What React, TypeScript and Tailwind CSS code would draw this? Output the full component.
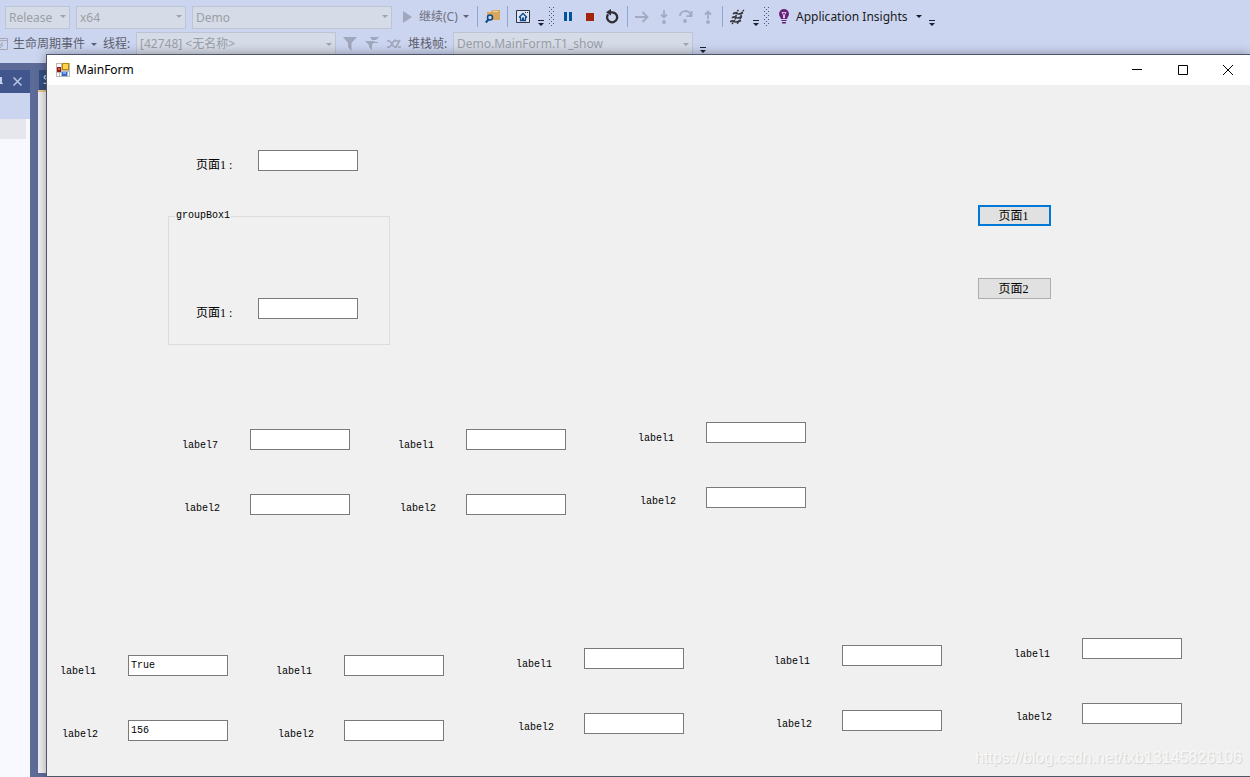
import { useId, type ReactNode } from 'react';
import clsx from 'clsx';

type FieldProps = {
  label: string;
  value?: string;
  className?: string;
  labelClass: string;
};

function Field({ label, value = '', className, labelClass }: FieldProps) {
  const id = useId();
  return (
    <div className={clsx('flex items-start', className)}>
      <label htmlFor={id} className={clsx('shrink-0 leading-3 whitespace-nowrap', labelClass)}>
        {label}
      </label>
      <input
        id={id}
        type="text"
        defaultValue={value}
        className="h-[21px] w-[100px] border border-[#7a7a7a] bg-white px-0.5 font-['Liberation_Mono',monospace] text-[10px] leading-3 outline-none"
      />
    </div>
  );
}

// Two stacked fields, the second label is indented slightly.
function Pair({ first = 'label1', values = [], className }: { first?: string; values?: string[]; className?: string }) {
  return (
    <div className={clsx("flex flex-col gap-[42px] font-['Liberation_Mono',monospace] text-[10px]", className)}>
      <Field label={first} value={values[0]} labelClass="w-[68px] pt-[11px]" />
      <Field label="label2" value={values[1]} labelClass="w-[68px] pl-0.5 pt-[9px]" />
    </div>
  );
}

function PageField({ className }: { className: string }) {
  return (
    <Field
      label="页面1 :"
      className={className}
      labelClass="w-[62px] pt-[9px] font-['Liberation_Serif','Noto_Sans_CJK_SC',serif] text-xs"
    />
  );
}

function Caret({ className }: { className?: string }) {
  return (
    <svg width="6" height="3" viewBox="0 0 6 3" className={clsx('shrink-0', className)} fill="currentColor">
      <path d="M0 0h6L3 3z" />
    </svg>
  );
}

function Combo({ label, value, className }: { label: string; value: string; className: string }) {
  return (
    <div className={clsx('relative shrink-0', className)}>
      <select
        aria-label={label}
        className="h-[23px] w-full appearance-none border border-[#bcc4d6] bg-[#d5dbe7] pl-[3px] text-xs text-[#9b9ea6] outline-none"
      >
        <option>{value}</option>
      </select>
      <Caret className="pointer-events-none absolute top-[11px] right-1 text-[#9da3b2]" />
    </div>
  );
}

function ToolButton({ label, className, children }: { label: string; className: string; children: ReactNode }) {
  return (
    <button type="button" aria-label={label} className={clsx('flex h-6 shrink-0 items-center justify-center', className)}>
      {children}
    </button>
  );
}

function Separator({ className }: { className?: string }) {
  return <div className={clsx('h-[21px] w-px shrink-0 bg-[#8fa5d3]', className)} />;
}

function Overflow({ className }: { className: string }) {
  return (
    <ToolButton label="Toolbar options" className={clsx('pt-3', className)}>
      <svg width="6" height="6" viewBox="0 0 6 6" fill="#1b2233" className="shrink-0">
        <path d="M0 0h6v1H0zM0 3h6L3 6z" />
      </svg>
    </ToolButton>
  );
}

function Grip({ className }: { className: string }) {
  return (
    <div className={clsx('flex shrink-0 justify-center', className)}>
      <svg width="5" height="19" viewBox="0 0 5 19" fill="#4b5779">
        {[0, 4, 8, 12, 16].map((y) => (
          <path key={y} d={`M0 ${y}h1v1h-1zM4 ${y}h1v1h-1zM2 ${y + 2}h1v1h-1z`} />
        ))}
      </svg>
    </div>
  );
}

function MainToolbar() {
  return (
    <div className="flex h-7 items-center pt-[5px] pl-[5px]">
      <Combo label="Configuration" value="Release" className="w-[65px]" />
      <Combo label="Platform" value="x64" className="ml-1.5 w-[110px]" />
      <Combo label="Startup project" value="Demo" className="ml-1.5 w-[200px]" />
      <button type="button" className="flex h-6 w-[85px] shrink-0 items-center pl-[11px] text-xs whitespace-nowrap text-[#6d717d]">
        <svg width="9" height="12" viewBox="0 0 9 12" fill="#a0a7bd" className="mr-[7px]">
          <path d="M0 0l9 6-9 6z" />
        </svg>
        继续(C)
        <Caret className="ml-[5px] text-[#5e6373]" />
      </button>
      <Separator />
      <ToolButton label="Find in files" className="w-[29px]">
        <svg width="15" height="15" viewBox="0 0 15 15">
          <path d="M2 3h4l1-2h8v10H2z" fill="#d8a65c" />
          <path d="M8 2h5v1H8z" fill="#f0d5a5" />
          <circle cx="5" cy="8.5" r="2.5" fill="#ccd5f0" stroke="#0b4a86" strokeWidth="1.5" />
          <path d="M3.5 10.5L.8 13.5" stroke="#0b4a86" strokeWidth="2" />
        </svg>
      </ToolButton>
      <Separator />
      <ToolButton label="Home" className="w-[29px]">
        <svg width="14" height="13" viewBox="0 0 14 13" fill="none">
          <path d="M.5.5h13v12H.5z" fill="#dfe5f6" stroke="#303440" />
          <path d="M9 2h1v1H9zM11 2h1v1h-1z" fill="#303440" />
          <path d="M3 7.5l4-4 4 4M4.5 7v3.5h5V7" stroke="#0b4a86" strokeWidth="1.3" />
          <path d="M6 7.5h2V10H6z" fill="#0b4a86" />
        </svg>
      </ToolButton>
      <Overflow className="w-2" />
      <Grip className="w-[13px]" />
      <ToolButton label="Pause" className="w-5">
        <svg width="8" height="9" viewBox="0 0 8 9" fill="#00539c"><path d="M0 0h3v9H0zM5 0h3v9H5z" /></svg>
      </ToolButton>
      <ToolButton label="Stop" className="w-6">
        <svg width="8" height="8" viewBox="0 0 8 8" fill="#a1260d"><path d="M0 0h8v8H0z" /></svg>
      </ToolButton>
      <ToolButton label="Restart" className="w-5">
        <svg width="14" height="15" viewBox="0 0 14 15" fill="none">
          <path d="M3.2 5.2a5 5 0 1 0 4-1.9H4" stroke="#2f2f33" strokeWidth="2.3" />
          <path d="M1 3.3L6 0v6.6z" fill="#2f2f33" />
        </svg>
      </ToolButton>
      <Separator className="ml-[5px]" />
      <ToolButton label="Show next statement" className="w-7">
        <svg width="14" height="12" viewBox="0 0 14 12" fill="none" stroke="#a4abc1" strokeWidth="1.8">
          <path d="M0 6h12M7.500 1l5 5-5 5" />
        </svg>
      </ToolButton>
      <ToolButton label="Step into" className="w-4">
        <svg width="8" height="14" viewBox="0 0 8 14" fill="none">
          <path d="M4 0v7M1 4.500l3 3 3-3" stroke="#a4abc1" strokeWidth="1.8" />
          <circle cx="4" cy="12" r="2" fill="#a4abc1" />
        </svg>
      </ToolButton>
      <ToolButton label="Step over" className="w-7">
        <svg width="14" height="13" viewBox="0 0 14 13" fill="none">
          <path d="M1 6a5 4.500 0 0 1 10.500-.5M12.500 1v5.200H7.500" stroke="#a4abc1" strokeWidth="1.8" />
          <circle cx="6" cy="11" r="2" fill="#a4abc1" />
        </svg>
      </ToolButton>
      <ToolButton label="Step out" className="w-4">
        <svg width="8" height="14" viewBox="0 0 8 14" fill="none">
          <path d="M4 9V1.500M1 4.500l3-3 3 3" stroke="#a4abc1" strokeWidth="1.8" />
          <circle cx="4" cy="12" r="2" fill="#a4abc1" />
        </svg>
      </ToolButton>
      <Separator className="ml-1.5" />
      <ToolButton label="Show threads in source" className="w-7">
        <svg width="15" height="16" viewBox="0 0 15 16" fill="none" stroke="#35363a" strokeWidth="1.5">
          <path d="M3 5q2-2 4-.5t6-1M2 9q2-2 4-.5t6-1M0 13q2-2 4-.5t7-1" />
          <path d="M8.500 1Q6.500 3 6 7T2 15M14 1q-2.500 2-3 6T7 15" strokeDasharray="2 .7" />
        </svg>
      </ToolButton>
      <Overflow className="w-[10px]" />
      <Grip className="w-[11px]" />
      <button type="button" className="flex h-6 w-[154px] shrink-0 items-center text-xs whitespace-nowrap text-[#1b1b24]">
        <svg width="10" height="15" viewBox="0 0 10 15" className="mr-[7px] ml-[7px] shrink-0">
          <path d="M5 0a5 5 0 0 1 5 5c0 2-1.500 3-2 5H2C1.500 8 0 7 0 5a5 5 0 0 1 5-5z" fill="#68217a" />
          <path d="M3 3.500h4L5.500 6V9h-1V6z" fill="none" stroke="#e5d5ee" strokeWidth=".9" />
          <path d="M2.500 11h5v1h-5zM3 13h4v1.500H3z" fill="#68217a" />
        </svg>
        <span className="grow text-left">Application Insights</span>
        <Caret className="mr-1" />
      </button>
      <Overflow className="w-3" />
    </div>
  );
}

function DebugToolbar() {
  return (
    <div className="flex h-[35px] items-start pt-1 text-xs text-[#5d606c]">
      <button type="button" className="flex h-6 w-[103px] shrink-0 items-center whitespace-nowrap">
        <svg width="8" height="12" viewBox="0 0 8 12" className="mr-[5px] shrink-0" fill="none" stroke="#a4a9b8">
          <path d="M0 .5h7.500v11H0M0 2.500h7" />
          <path d="M3 4L0 7h3L0 10" />
        </svg>
        生命周期事件
        <Caret className="ml-1.5 text-[#5e6373]" />
      </button>
      <span className="w-[33px] shrink-0 leading-6">线程:</span>
      <Combo label="线程" value="[42748] <无名称>" className="w-[200px]" />
      <ToolButton label="Filter threads" className="w-7">
        <svg width="14" height="14" viewBox="0 0 14 14" fill="#a0a7bc"><path d="M0 0h14L8.500 6v8L5 10V6z" /></svg>
      </ToolButton>
      <ToolButton label="Clear filter" className="w-4">
        <svg width="14" height="14" viewBox="0 0 14 14" fill="#a0a7bc" className="shrink-0">
          <path d="M0 4h10L7 8v5L4 10V8zM5 0h9l-3 3H7zM9 5h4v1H9z" />
        </svg>
      </ToolButton>
      <ToolButton label="Toggle flagged threads" className="w-7">
        <svg width="14" height="10" viewBox="0 0 14 10" fill="none" stroke="#a0a7bc" strokeWidth="1.6">
          <path d="M0 8q3 1 5-3t4-4M0 2q3-1 5 3t5 3M9 8l4-7M8 2h5M11 8h3" />
        </svg>
      </ToolButton>
      <span className="w-[45px] shrink-0 leading-6">堆栈帧:</span>
      <Combo label="堆栈帧" value="Demo.MainForm.T1_show" className="w-[240px]" />
      <Overflow className="w-5" />
    </div>
  );
}

function Workbench() {
  return (
    <div className="col-start-1 row-start-1 flex min-w-0 flex-col overflow-hidden font-['Noto_Sans','Noto_Sans_CJK_SC',sans-serif]">
      <div className="bg-[#ccd5f0]">
        <MainToolbar />
        <DebugToolbar />
      </div>
      <div className="flex grow gap-2 pt-[7px]">
        <aside className="flex w-[30px] shrink-0 flex-col bg-[#f7f9fe]">
          <div className="flex h-[23px] items-center justify-between bg-[#40568d] pr-2">
            <svg width="3" height="10" viewBox="0 0 3 10" fill="#c5d0ec"><path d="M0 0h2v6h1v1H0z" /></svg>
            <button type="button" aria-label="Close panel">
              <svg width="9" height="9" viewBox="0 0 9 9" stroke="#b9c5e6" strokeWidth="1.5"><path d="M.5.5l8 8M8.500.5l-8 8" /></svg>
            </button>
          </div>
          <div className="h-[26px] bg-[#ccd5f0]" />
          <div className="mr-1 h-5 bg-[#e6e7ed]" />
        </aside>
        <div className="mb-1 flex grow flex-col bg-[#f0f0f0]">
          <div className="h-5 border-l border-[#5d6b99] bg-[#364e7f] pl-1 text-xs leading-5 text-[#dfe6f7]">S</div>
          <div className="h-0.5 bg-[#f0c684]" />
        </div>
      </div>
    </div>
  );
}

function TitleBar() {
  return (
    <header className="flex h-[30px] items-center bg-white pl-[9px]">
      <svg width="14" height="14" viewBox="0 0 14 14">
        <path d="M0 0h14v14H0z" fill="#b9b9b9" />
        <path d="M1 1h4v3H1zM1 10h2v3H1zM4 10h1v3H4zM12 9h1v4h-1z" fill="#fff" />
        <path d="M6 0h7v7H6z" fill="#b98a00" />
        <path d="M7 1h5v5H7z" fill="#ffd34f" />
        <path d="M1 4h4v5H1z" fill="#8e1b14" />
        <path d="M2 5h2v2H2z" fill="#e4533f" />
        <path d="M6 9h5v4H6z" fill="#3269d1" />
        <path d="M7 9h3v2H7z" fill="#79a8f5" />
      </svg>
      <h1 className="grow pl-1.5 font-['Noto_Sans',sans-serif] text-xs text-black">MainForm</h1>
      <button type="button" aria-label="Minimize" className="flex h-full w-[46px] items-center justify-center">
        <svg width="10" height="10" viewBox="0 0 10 10"><path d="M0 4h10v1H0z" /></svg>
      </button>
      <button type="button" aria-label="Maximize" className="flex h-full w-[46px] items-center justify-center">
        <svg width="10" height="10" viewBox="0 0 10 10" fill="none" stroke="#000"><path d="M.5.5h9v9h-9z" /></svg>
      </button>
      <button type="button" aria-label="Close" className="flex h-full w-11 items-center justify-center">
        <svg width="10" height="10" viewBox="0 0 10 10" stroke="#000"><path d="M0 0l10 10M10 0L0 10" /></svg>
      </button>
    </header>
  );
}

function PageButton({ children, focused }: { children: ReactNode; focused?: boolean }) {
  return (
    <button
      type="button"
      className={clsx(
        "flex h-[21px] w-[73px] items-center justify-center bg-[#e1e1e1] pr-0.5 font-['Liberation_Serif','Noto_Sans_CJK_SC',serif] text-xs leading-3",
        focused ? 'border-2 border-[#0078d7]' : 'border border-[#adadad]',
      )}
    >
      {children}
    </button>
  );
}

function MainForm() {
  return (
    <main className="z-10 col-start-1 row-start-1 mt-[54px] ml-[46px] flex min-w-0 flex-col border-t border-b border-l border-[#50566a] bg-[#f0f0f0] text-black shadow-[0_0_10px_rgba(0,0,0,0.35)]">
      <TitleBar />
      <div className="flex items-start justify-between pr-[199px] pl-[121px]">
        <div className="pt-[65px]">
          <PageField className="pl-7" />
          <fieldset className="mt-[39px] w-[222px] border border-[#dcdcdc] px-1.5 pb-[25px]">
            <legend className="px-px font-['Liberation_Mono',monospace] text-[10px] leading-3">groupBox1</legend>
            <PageField className="mt-[76px] ml-[21px]" />
          </fieldset>
        </div>
        <div className="flex flex-col gap-[52px] pt-[120px]">
          <PageButton focused>页面1</PageButton>
          <PageButton>页面2</PageButton>
        </div>
      </div>
      <div className="mt-[77px] flex items-start pl-[135px]">
        <Pair first="label7" className="pt-[7px]" />
        <Pair className="ml-12 pt-[7px]" />
        <Pair className="ml-[72px]" />
      </div>
      <div className="mt-[123px] flex items-start pl-[13px]">
        <Pair values={['True', '156']} className="pt-[17px]" />
        <Pair className="ml-12 pt-[17px]" />
        <Pair className="ml-[72px] pt-[10px]" />
        <Pair className="ml-[90px] pt-[7px]" />
        <Pair className="ml-[72px]" />
      </div>
      <footer className="flex grow items-end justify-end pr-2 pb-2">
        <a
          href="https://blog.csdn.net/txb13145826106"
          className="font-['Liberation_Sans',sans-serif] text-base leading-5 text-[#f8f8f8] [text-shadow:1px_1px_1px_#d2d2d2]"
        >
          https://blog.csdn.net/txb13145826106
        </a>
      </footer>
    </main>
  );
}

export default function App() {
  return (
    <div className="grid min-h-screen grid-cols-1 overflow-hidden bg-[#5d6b99]">
      <Workbench />
      <MainForm />
    </div>
  );
}
